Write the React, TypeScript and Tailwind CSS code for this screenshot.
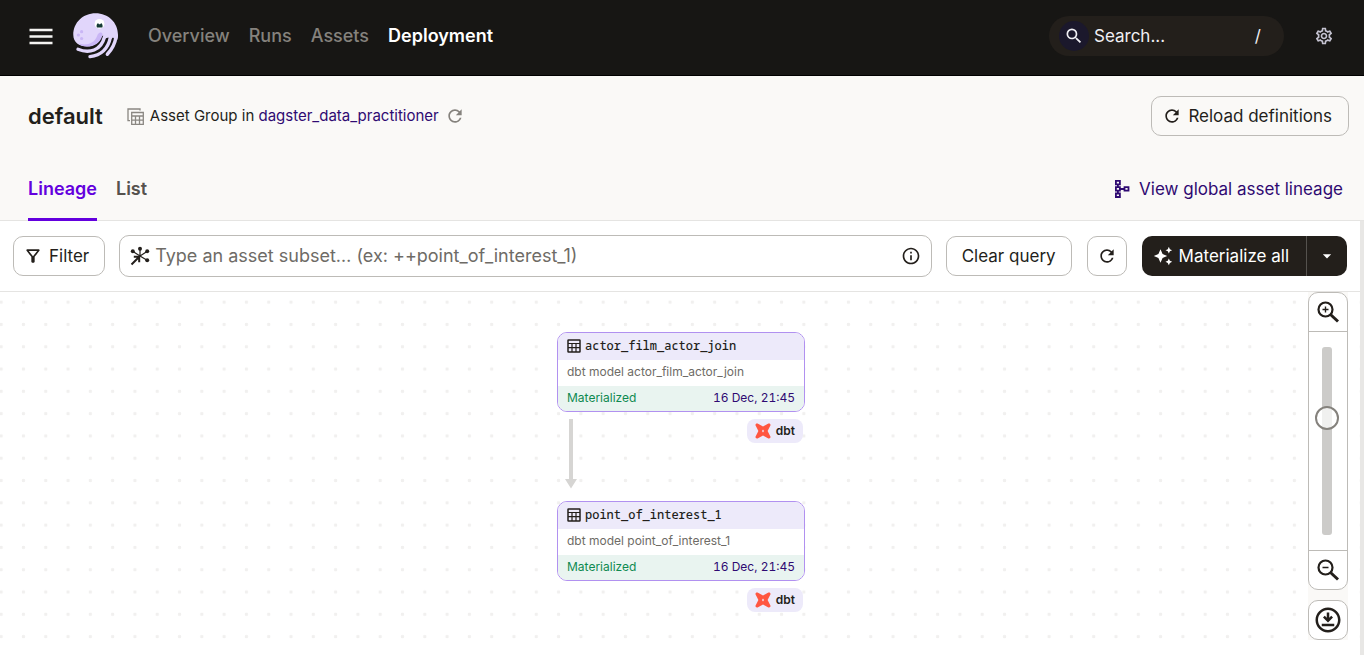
import React from "react";
import {
  MdArrowDropDown,
  MdAutoAwesome,
  MdInfoOutline,
  MdOutlineDownloadForOffline,
  MdOutlineFilterAlt,
  MdOutlineSettings,
  MdRefresh,
  MdSearch,
} from "react-icons/md";

function DagsterLogo() {
  return (
    <svg viewBox="0 0 46 46" className="h-[46px] w-[46px]" aria-hidden="true">
      <path
        d="M.3 22C.3 9.500 10 .3 22.600.3S45 9.500 45 22c0 2-.3 3.500-.8 5l-2.700-1-1.500-1.500-2.500 2-2-2-3.500 1-2-3-1.500 1C26.500 29 21.500 33.500 14 33.500 6 33.500.3 29 .3 22z"
        fill="#e1d6fb"
      />
      <path
        d="M5.500 30.600c8.500 2.400 16-.6 18.500-7.400 1-2.700 2.300-3.900 4-3.600 1.600.3 1.800 2 1.200 3.600C26.800 30 21.500 33.500 14 33.500c-3.300 0-6.300-1-8.500-2.900z"
        fill="#c9b6f5"
      />
      <g fill="none" stroke="#e1d6fb" strokeWidth="3.400" strokeLinecap="round">
        <path d="M5 36.300c11 4.500 23 1.500 26.500-12.300" />
        <path d="M17 43.600C27.500 42.500 35 36 37.500 24" />
        <path d="M34.300 41.300C38.500 37 42 31 43.200 23" />
      </g>
      <circle cx="26.500" cy="10.800" r="4.900" fill="#fff" />
      <path d="M23.600 12.800c0-1.300.6-2.300 1.600-2.900 0 1 .9 1.700 1.800 1.400.6-.2 1-.6 1-1.200 1 .6 1.600 1.700 1.600 2.800 0 .6-.1 1.100-.3 1.600h-5.400c-.2-.5-.3-1.100-.3-1.700z" fill="#163b36" />
      <circle cx="8.600" cy="18.700" r="1.600" fill="#c9b6f5" />
      <circle cx="5.400" cy="22" r="1.600" fill="#c9b6f5" />
      <circle cx="8.600" cy="25.500" r="1.600" fill="#c9b6f5" />
    </svg>
  );
}

function AssetGroupIcon() {
  return (
    <svg viewBox="0 0 17 17" className="h-[17px] w-[17px]" fill="none" stroke="#8a8782" strokeWidth="1.300" aria-hidden="true">
      <path d="M13 2.600V1H1v11.700h2" />
      <path d="M4.700 4.500h11.600v11.800H4.700zM4.700 8h11.600M4.700 12.200h11.600M8.500 8v8.300M12.500 8v8.300" />
    </svg>
  );
}

function TableIcon() {
  return (
    <svg viewBox="0 0 14 14" className="h-[14px] w-[14px]" fill="none" stroke="#231f1b" aria-hidden="true">
      <rect x="1" y="1" width="12" height="12" rx=".5" strokeWidth="1.500" />
      <path d="M1 4.500h12M1 8.700h12M5 4.500V13M9 4.500V13" strokeWidth="1.200" />
    </svg>
  );
}

function LineageIcon() {
  return (
    <svg viewBox="0 0 16 20" className="h-5 w-4" fill="none" stroke="#2f0a72" strokeWidth="1.800" aria-hidden="true">
      <path d="M1.900 1.900h4v3.500h-4zM1.900 8.200h4v3.500h-4zM1.900 14.500h4V18h-4zM10.500 8.200h4v3.500h-4z" />
      <path d="M3.900 5.400v2.800M3.900 11.700v2.800M5.900 10h4.600" />
    </svg>
  );
}

function SelectionIcon() {
  return (
    <svg viewBox="0 0 20 20" className="h-5 w-5 shrink-0" stroke="#231f1b" fill="#231f1b" aria-hidden="true">
      <path d="M10 10V3M10 10 3 5.500M10 10l7-4.500M10 10l7.500 4.500" strokeWidth="1.200" fill="none" />
      <path d="M1.500 18.500 8.500 11.500M3.800 10.800h5.400v5.400" strokeWidth="2" fill="none" />
      <g stroke="none">
        <circle cx="10" cy="2.800" r="2" />
        <circle cx="2.800" cy="5.300" r="2" />
        <circle cx="17.200" cy="5.300" r="2" />
        <circle cx="17.200" cy="14.300" r="2" />
      </g>
    </svg>
  );
}

function ZoomIcon({ plus }: { plus?: boolean }) {
  return (
    <svg viewBox="0 0 24 24" className="h-6 w-6" fill="none" stroke="#231f1b" aria-hidden="true">
      <circle cx="9.500" cy="9.500" r="7" strokeWidth="2.200" />
      <path d="m14.500 14.500 7.500 7" strokeWidth="3" />
      <path d={plus ? "M6.500 9.500h6M9.500 6.500v6" : "M6.500 9.500h6"} strokeWidth="1.400" />
    </svg>
  );
}

function DbtIcon() {
  return (
    <svg viewBox="0 0 16 16" className="h-4 w-4" aria-hidden="true">
      <path
        d="M2.600.6 8 3.500 13.400.6c1.300-.6 2.600.7 2 2L12.600 8l2.800 5.400c.6 1.300-.7 2.600-2 2L8 12.500l-5.400 2.900c-1.300.6-2.600-.7-2-2L3.400 8 .6 2.600C0 1.300 1.300 0 2.600.6z"
        fill="#ff5640"
      />
      <path d="M8 6.600 9 8 8 9.400 7 8z" fill="#edeafa" />
    </svg>
  );
}

const NAV = ["Overview", "Runs", "Assets", "Deployment"];

function TopNav() {
  return (
    <header className="flex h-[76px] shrink-0 items-center border-b border-black bg-[#171614] pr-[30px] pb-[3px] pl-[29px] text-white">
      <button aria-label="Open menu">
        <svg viewBox="0 0 24 17" className="h-[17px] w-6" stroke="#f4f3f1" strokeWidth="2.400" aria-hidden="true">
          <path d="M.5 2h23M.5 8.500h23M.5 15h23" />
        </svg>
      </button>
      <a href="#home" aria-label="Home" className="ml-5">
        <DagsterLogo />
      </a>
      <nav className="ml-[29px] flex gap-[19px] text-lg font-medium">
        {NAV.map((item) => (
          <a key={item} href={"#" + item.toLowerCase()} className={item === "Deployment" ? "font-semibold text-white" : "text-[#85827d]"}>
            {item}
          </a>
        ))}
      </nav>
      <button className="ml-auto flex h-10 w-[235px] items-center rounded-full bg-[#231f1b] pr-[23px] pl-[10px] text-[17px] leading-7 text-[#f0eff4]">
        <span className="mr-[5px] flex h-[30px] w-[30px] items-center justify-center rounded-full bg-[#1b182c]">
          <MdSearch className="h-5 w-5" />
        </span>
        Search...
        <span className="ml-auto">/</span>
      </button>
      <button aria-label="Settings" className="ml-[30px] text-[#c4c2d0]">
        <MdOutlineSettings className="h-5 w-5" />
      </button>
    </header>
  );
}

function PageHeader() {
  return (
    <section className="shrink-0 border-b border-[#e5e4e2] bg-[#faf9f7]">
      <div className="flex h-20 items-center pr-[15px] pl-7">
        <h1 className="text-[22px] leading-8 font-semibold">default</h1>
        <div className="ml-6 flex items-center text-[15px]">
          <AssetGroupIcon />
          <span className="ml-[6px]">
            Asset Group in{" "}
            <a href="#location" className="text-[#2f0a72]">
              dagster_data_practitioner
            </a>
          </span>
          <button aria-label="Reload location" className="ml-[6px] text-[#85827d]">
            <MdRefresh className="h-5 w-5" />
          </button>
        </div>
        <button className="ml-auto flex h-10 items-center gap-[6px] rounded-[10px] border border-[#bdbbb7] pr-4 pl-[10px] text-[17px] leading-7">
          <MdRefresh className="h-5 w-5" />
          Reload definitions
        </button>
      </div>
      <div className="-mb-px flex h-[65px] items-stretch gap-[19px] pr-[21px] pl-7 text-lg font-semibold">
        <a href="#lineage" className="flex items-center border-b-[3px] border-[#6300de] pt-[3px] text-[#6300de]">
          Lineage
        </a>
        <a href="#list" className="flex items-center border-b-[3px] border-transparent pt-[3px] text-[#55524e]">
          List
        </a>
        <a href="#global" className="ml-auto flex items-center gap-[9px] text-[17px] leading-7 font-normal text-[#2f0a72]">
          <LineageIcon />
          View global asset lineage
        </a>
      </div>
    </section>
  );
}

function Toolbar() {
  return (
    <div className="flex h-[71px] shrink-0 items-center border-b border-[#e5e4e2] pr-[13px] pl-[13px] text-[17px] leading-7">
      <button className="flex h-10 items-center gap-[6px] rounded-[10px] border border-[#bdbbb7] pr-[15px] pl-[9px]">
        <MdOutlineFilterAlt className="h-5 w-5" />
        Filter
      </button>
      <label className="ml-[14px] flex h-[42px] min-w-0 flex-1 items-center gap-[5px] rounded-[10px] border border-[#bdbbb7] px-[10px]">
        <SelectionIcon />
        <input
          type="text"
          aria-label="Asset selection"
          placeholder="Type an asset subset… (ex: ++point_of_interest_1)"
          className="min-w-0 flex-1 bg-transparent text-lg outline-none placeholder:text-[#6e6b66]"
        />
        <MdInfoOutline className="h-5 w-5 shrink-0" />
      </label>
      <button className="ml-[14px] h-10 rounded-[10px] border border-[#bdbbb7] px-[15px]">Clear query</button>
      <button aria-label="Refresh" className="ml-[15px] flex h-10 w-10 items-center justify-center rounded-[10px] border border-[#bdbbb7]">
        <MdRefresh className="h-5 w-5" />
      </button>
      <div className="ml-[15px] flex h-10 overflow-hidden rounded-[10px] bg-[#231f1b] text-white">
        <button className="flex items-center gap-[6px] pr-[17px] pl-[11px]">
          <MdAutoAwesome className="h-5 w-5 shrink-0" />
          Materialize all
        </button>
        <button aria-label="More options" className="flex w-[41px] items-center justify-center border-l border-[#55524e]">
          <MdArrowDropDown className="h-5 w-5" />
        </button>
      </div>
    </div>
  );
}

type Asset = { name: string; date: string; downstream?: boolean };

const ASSETS: Asset[] = [
  { name: "actor_film_actor_join", date: "16 Dec, 21:45", downstream: true },
  { name: "point_of_interest_1", date: "16 Dec, 21:45" },
];

function AssetNode({ name, date, downstream }: Asset) {
  return (
    <div className="w-[248px]">
      <article className="h-20 overflow-hidden rounded-[10px] border border-[#b191f0] bg-white text-[12px]">
        <h2 className="flex h-[27px] items-center gap-1 bg-[#edeafa] px-[9px] pb-px font-['Noto_Sans_Mono','Liberation_Mono',monospace] font-medium">
          <TableIcon />
          {name}
        </h2>
        <p className="flex h-[26px] items-center px-[9px] pb-[2px] text-[#6e6b66]">dbt model {name}</p>
        <div className="flex h-[25px] items-center justify-between bg-[#e9f4f0] px-[9px] pb-px">
          <span className="text-[#0f8a50]">Materialized</span>
          <a href="#run" className="text-[#2f0a72] tabular-nums">
            {date}
          </a>
        </div>
      </article>
      <div className="flex h-[89px] items-start justify-between pt-[7px] pr-[2px] pl-2">
        <svg viewBox="0 0 12 70" className="h-[70px] w-3" aria-hidden="true">
          {downstream && <path d="M4 0h4v60h4l-6 9.500L0 60h4z" fill="#d6d5d3" />}
        </svg>
        <span className="flex h-6 items-center gap-[5px] rounded-lg bg-[#edeafa] px-2 text-[12px] font-semibold">
          <DbtIcon />
          dbt
        </span>
      </div>
    </div>
  );
}

function ZoomControls() {
  return (
    <div className="absolute top-0 right-3 flex w-10 flex-col bg-[#faf9f7]">
      <div className="flex flex-col overflow-hidden rounded-[10px] border border-[#bdbbb7] bg-white">
        <button aria-label="Zoom in" className="flex h-[39px] items-center justify-center border-b border-[#bdbbb7]">
          <ZoomIcon plus />
        </button>
        <div className="flex h-[218px] items-center justify-center pr-[2px]">
          <input
            type="range"
            aria-label="Zoom level"
            defaultValue={64}
            className="h-[188px] w-[10px] appearance-none rounded-[3px] bg-[#cccbc9] [direction:rtl] [writing-mode:vertical-lr] [&::-webkit-slider-thumb]:h-6 [&::-webkit-slider-thumb]:w-6 [&::-webkit-slider-thumb]:appearance-none [&::-webkit-slider-thumb]:rounded-full [&::-webkit-slider-thumb]:border-2 [&::-webkit-slider-thumb]:border-[#85827d] [&::-webkit-slider-thumb]:bg-white/70"
          />
        </div>
        <button aria-label="Zoom out" className="flex h-[39px] items-center justify-center border-t border-[#bdbbb7]">
          <ZoomIcon />
        </button>
      </div>
      <button aria-label="Download image" className="mt-[10px] flex h-10 items-center justify-center rounded-[10px] border border-[#bdbbb7] bg-white">
        <MdOutlineDownloadForOffline className="h-[30px] w-[30px]" />
      </button>
    </div>
  );
}

export default function App() {
  return (
    <div className="flex min-h-screen flex-col bg-white font-['Inter',sans-serif] text-[#231f1b]">
      <TopNav />
      <PageHeader />
      <div className="flex flex-1 flex-col border-r-4 border-[#e8e7e5]">
        <Toolbar />
        <main className="relative flex flex-1 flex-col items-center overflow-hidden bg-[radial-gradient(circle,#f1f0ef_1.5px,transparent_2px)] bg-[length:22.3px_22.3px] bg-[position:-10px_-1px] pt-10 pl-[2px]">
          <div className="-mb-[67px]">
            {ASSETS.map((asset) => (
              <AssetNode key={asset.name} {...asset} />
            ))}
          </div>
          <ZoomControls />
        </main>
      </div>
    </div>
  );
}
